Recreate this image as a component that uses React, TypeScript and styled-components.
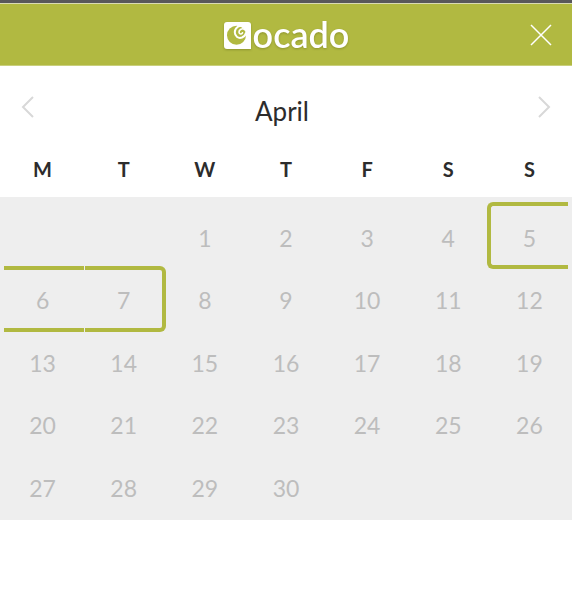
import React from "react";
import styled, { createGlobalStyle, css } from "styled-components";

const green = "#b1b941";

const GlobalStyle = createGlobalStyle`
  *, *::before, *::after { box-sizing: border-box; }
  body {
    margin: 0;
    background: #fff;
    color: #2c2c2c;
    font-family: Lato, "Liberation Sans", sans-serif;
  }
  button { font: inherit; color: inherit; border: 0; padding: 0; background: none; }
`;

const Header = styled.header`
  display: grid;
  grid-template-columns: 1fr auto 1fr;
  align-items: center;
  height: 66px;
  padding: 2px 13px 0;
  background: ${green};
  border-top: 3px solid #58585a;
  border-bottom: 1px solid #c9cf7c;
  box-shadow: inset 0 1px #d9dbb4;
`;

const Logo = styled.a`
  grid-column: 2;
  display: flex;
  align-items: center;
  gap: 2px;
  padding-left: 1px;
  color: #fff;
  text-decoration: none;
  filter: drop-shadow(0 1px 1px rgba(90, 95, 20, 0.4));
`;

const LogoText = styled.span`
  font-size: 36px;
  line-height: 36px;
  font-weight: 600;
  padding-bottom: 2px;
`;

const IconButton = styled.button`
  display: flex;
  justify-content: center;
  align-items: center;
  width: 32px;
  height: 32px;
  cursor: pointer;
`;

const CloseButton = styled(IconButton)`
  width: 36px;
  justify-self: end;
  color: #fff;
`;

const MonthBar = styled.div`
  display: flex;
  justify-content: space-between;
  align-items: flex-start;
  height: 76px;
  padding: 25px 12px 0;
  color: #d8d8d8;
`;

const MonthName = styled.h1`
  margin: 0;
  padding: 4px 8px 0 0;
  color: #2c2c2c;
  font-size: 26px;
  line-height: 32px;
  font-weight: 400;
`;

const Frame = styled.div`
  padding: 0 2px;
  background: linear-gradient(#fff 55px, #eee 55px);
`;

const Calendar = styled.table`
  width: 100%;
  table-layout: fixed;
  border-collapse: collapse;
`;

const Weekday = styled.th`
  height: 55px;
  padding: 0 0 2px;
  font-size: 20px;
  font-weight: 700;
`;

const Week = styled.tr`
  height: 62px;
  &:nth-child(even) { height: 63px; }
  &:first-child > td { padding-top: 10px; }
  &:last-child > td { padding-bottom: 1px; }
`;

const Cell = styled.td`
  height: inherit;
  padding: 0;
`;

type Mark = "start" | "middle" | "end";

const marks = {
  start: css`
    inset: -5px 2px 0 -2px;
    border-left-width: 4px;
    border-radius: 6px 0 0 6px;
  `,
  middle: css`
    inset: -3px -1px 0 2px;
  `,
  end: css`
    inset: -3px -2px 0 2px;
    border-right-width: 4px;
    border-radius: 0 6px 6px 0;
  `,
};

const Day = styled.button<{ $mark?: Mark }>`
  position: relative;
  display: block;
  width: 100%;
  height: 62px;
  padding-bottom: 1px;
  color: #bdbdbd;
  font-size: 23px;
  font-weight: 400;
  ${(p) =>
    p.$mark &&
    css`
      &::after {
        content: "";
        position: absolute;
        border: 0 solid ${green};
        border-top-width: 4px;
        border-bottom-width: 4px;
        ${marks[p.$mark]}
      }
    `}
  ${Week}:nth-child(even) & { height: 63px; }
`;

const weekdays = ["Monday", "Tuesday", "Wednesday", "Thursday", "Friday", "Saturday", "Sunday"];
const firstOffset = 2;
const weeks = Array.from({ length: 5 }, (_, w) =>
  Array.from({ length: 7 }, (_, d) => {
    const n = w * 7 + d + 1 - firstOffset;
    return n >= 1 && n <= 30 ? n : null;
  })
);
const slots: Record<number, Mark> = { 5: "start", 6: "middle", 7: "end" };

function LogoMark() {
  return (
    <svg width="27" height="27" viewBox="0 0 27 27" aria-hidden="true">
      <path d="M3 0H24Q27 0 27 3V27H3Q0 27 0 24V3Q0 0 3 0Z" fill="#fff" />
      <circle cx="12.5" cy="13.2" r="9.5" fill={green} />
      <path
        d="M20 4C15 2.500 10.800 6 10.800 10.300C10.800 14.500 14.500 16.800 18 15.500C20 14.700 21.500 13 22 11"
        fill="none"
        stroke="#fff"
        strokeWidth="2"
        strokeLinecap="round"
      />
      <path
        d="M20.500 7.500C18.500 5.800 14.800 7.500 15 10.200C15.200 12.300 18 12.500 18.500 10.800"
        fill="none"
        stroke="#fff"
        strokeWidth="1.600"
        strokeLinecap="round"
      />
    </svg>
  );
}

export default function App() {
  return (
    <>
      <GlobalStyle />
      <Header>
        <Logo href="#" aria-label="ocado">
          <LogoMark />
          <LogoText>ocado</LogoText>
        </Logo>
        <CloseButton type="button" aria-label="Close">
          <svg width="22" height="22" viewBox="0 0 22 22" fill="none" stroke="currentColor" strokeWidth="1.500">
            <path d="M1 1L21 21M21 1L1 21" />
          </svg>
        </CloseButton>
      </Header>
      <main>
        <MonthBar>
          <IconButton type="button" aria-label="Previous month">
            <svg width="14" height="24" viewBox="0 0 14 24" fill="none" stroke="currentColor" strokeWidth="2">
              <path d="M12 2L2 12L12 22" />
            </svg>
          </IconButton>
          <MonthName>April</MonthName>
          <IconButton type="button" aria-label="Next month">
            <svg width="14" height="24" viewBox="0 0 14 24" fill="none" stroke="currentColor" strokeWidth="2">
              <path d="M2 2L12 12L2 22" />
            </svg>
          </IconButton>
        </MonthBar>
        <Frame>
          <Calendar>
            <thead>
              <tr>
                {weekdays.map((day) => (
                  <Weekday key={day} scope="col" abbr={day}>
                    {day[0]}
                  </Weekday>
                ))}
              </tr>
            </thead>
            <tbody>
              {weeks.map((week, w) => (
                <Week key={w}>
                  {week.map((n, d) => (
                    <Cell key={d}>
                      {n && (
                        <Day type="button" disabled $mark={slots[n]}>
                          {n}
                        </Day>
                      )}
                    </Cell>
                  ))}
                </Week>
              ))}
            </tbody>
          </Calendar>
        </Frame>
      </main>
    </>
  );
}
